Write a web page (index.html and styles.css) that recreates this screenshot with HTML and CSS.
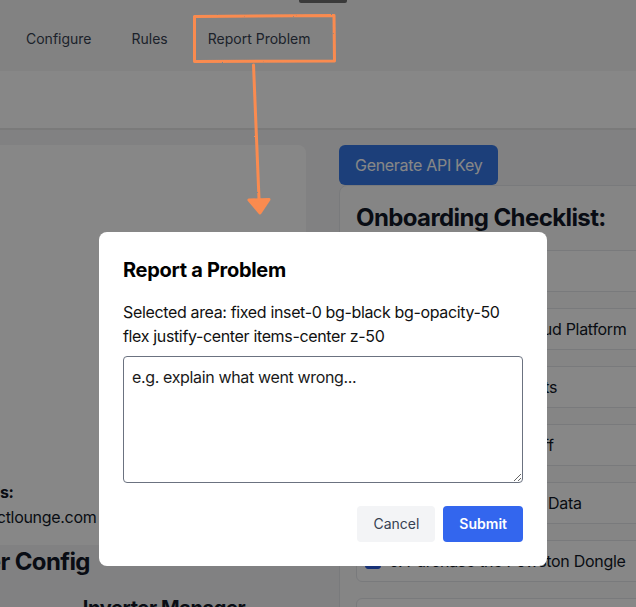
FILE: index.html
```html
<!DOCTYPE html>
<html lang="en">
<head>
<meta charset="utf-8">
<title>Report a Problem</title>
<link rel="stylesheet" href="styles.css">
</head>
<body>
<div class="page">
  <header class="nav">
    <span class="nav-tip"></span>
    <a class="nav-link">Configure</a>
    <a class="nav-link">Rules</a>
    <a class="nav-link">Report Problem</a>
  </header>
  <div class="band"></div>
  <main class="main">
    <section class="left">
      <div class="info-card">
        <p class="info-label">Contact Us:</p>
        <p class="info-value">hi@productlounge.com</p>
      </div>
      <h2 class="config-title">Inverter Config</h2>
      <h3 class="manager-title">Inverter Manager</h3>
    </section>
    <section class="right">
      <button class="api-btn">Generate API Key</button>
      <div class="checklist">
        <h2 class="checklist-title">Onboarding Checklist:</h2>
        <ul class="items">
          <li class="item"><span class="check"></span>1. Create Account</li>
          <li class="item"><span class="check"></span>2. Connect to the Cloud Platform</li>
          <li class="item"><span class="check"></span>3. Register Your Assets</li>
          <li class="item"><span class="check"></span>4. Configure The Tariff</li>
          <li class="item"><span class="check"></span>5. Import all historical Data</li>
          <li class="item"><span class="check checked"></span>6. Purchase the Powston Dongle</li>
          <li class="item"><span class="check"></span>7. Go Live</li>
        </ul>
      </div>
    </section>
  </main>
</div>

<div class="overlay">
  <div class="modal">
    <h2 class="modal-title">Report a Problem</h2>
    <p class="modal-text">Selected area: fixed inset-0 bg-black bg-opacity-50 flex justify-center items-center z-50</p>
    <textarea class="modal-input" placeholder="e.g. explain what went wrong..."></textarea>
    <div class="modal-actions">
      <button class="btn btn-cancel">Cancel</button>
      <button class="btn btn-submit">Submit</button>
    </div>
  </div>
</div>

<svg class="annotation" width="636" height="607" viewBox="0 0 636 607">
  <defs>
    <filter id="rough" x="-5%" y="-5%" width="110%" height="110%">
      <feTurbulence type="fractalNoise" baseFrequency="0.9" numOctaves="2" seed="3"/>
      <feDisplacementMap in="SourceGraphic" scale="1.6"/>
    </filter>
  </defs>
  <g filter="url(#rough)" stroke="#fa8b50" fill="none" stroke-width="3" stroke-linejoin="round" stroke-linecap="round">
    <path d="M194.5 16.5 L334 15.5 L334.5 61 L194.5 61.5 Z"/>
    <path d="M253.5 65 L259 199"/>
    <path d="M249 200 L269 199.5 L260 213 Z" fill="#fa8b50"/>
  </g>
</svg>
</body>
</html>
```

FILE: styles.css
```css
html, body {
  margin: 0;
  padding: 0;
}

body {
  width: 636px;
  height: 607px;
  overflow: hidden;
  background: #f4f4f5;
  font-family: Inter, "Noto Sans", "Liberation Sans", sans-serif;
  color: #111827;
}

.page {
  width: 636px;
  overflow: hidden;
}

/* top navigation */
.nav {
  position: relative;
  height: 71px;
  box-sizing: border-box;
  padding: 29px 0 0 26px;
  display: flex;
  align-items: flex-start;
  gap: 40px;
  background: #f6f6f6;
}

.nav-tip {
  position: absolute;
  left: 299px;
  top: 0;
  width: 48px;
  height: 3px;
  border-radius: 0 0 2px 2px;
  background: #6e6e6e;
}

.nav-link {
  font-size: 14px;
  line-height: 20px;
  color: #374151;
}

.band {
  height: 57px;
  background: #ffffff;
  border-bottom: 2px solid #e6e6e6;
}

/* main content */
.main {
  display: grid;
  grid-template-columns: 384px 340px;
  column-gap: 33px;
  margin-left: -78px;
  padding-top: 15px;
}

.left {
  display: flex;
  flex-direction: column;
}

.info-card {
  height: 400px;
  box-sizing: border-box;
  padding: 16px 16px 16px 4px;
  background: #ffffff;
  border-radius: 8px;
  display: flex;
  flex-direction: column;
  justify-content: flex-end;
}

.info-label {
  margin: 0 0 1px;
  font-size: 16px;
  line-height: 24px;
  font-weight: 700;
  letter-spacing: -0.4px;
}

.info-value {
  margin: 0;
  font-size: 16px;
  line-height: 24px;
  letter-spacing: -0.3px;
}

.config-title {
  margin: 1px 0 0;
  font-size: 24px;
  line-height: 32px;
  font-weight: 700;
  letter-spacing: -0.6px;
}

.manager-title {
  margin: 16px 0 0;
  padding-left: 100px;
  text-align: center;
  font-size: 20px;
  line-height: 28px;
  font-weight: 700;
  letter-spacing: -0.4px;
}

.right {
  display: flex;
  flex-direction: column;
  align-items: flex-start;
}

.api-btn {
  height: 40px;
  padding: 0 16px;
  border: none;
  border-radius: 6px;
  background: #3578e6;
  color: #ffffff;
  font-family: inherit;
  font-size: 16px;
  line-height: 24px;
  letter-spacing: -0.3px;
}

.checklist {
  align-self: stretch;
  padding: 16px;
  border: 1px solid #e5e7eb;
  border-radius: 8px;
  background: #fbfbfb;
}

.checklist-title {
  margin: 0 0 16px;
  font-size: 24px;
  line-height: 32px;
  font-weight: 700;
  letter-spacing: -0.6px;
}

.items {
  list-style: none;
  margin: 0;
  padding: 0;
  display: flex;
  flex-direction: column;
  gap: 16px;
}

.item {
  display: flex;
  align-items: center;
  gap: 8px;
  padding: 8px;
  border: 1px solid #e5e7eb;
  border-radius: 6px;
  background: #ffffff;
  font-size: 16px;
  line-height: 24px;
  letter-spacing: -0.3px;
  white-space: nowrap;
}

.check {
  width: 16px;
  height: 16px;
  box-sizing: border-box;
  border: 1px solid #6b7280;
  border-radius: 3px;
  background: #ffffff;
  flex: none;
}

.check.checked {
  border-color: #2d5fe0;
  background: #2d5fe0;
}

/* modal */
.overlay {
  position: fixed;
  inset: 0;
  background: rgba(0, 0, 0, 0.47);
  display: flex;
  align-items: flex-start;
  justify-content: flex-start;
  padding: 232px 0 0 99px;
  z-index: 50;
}

.modal {
  width: 448px;
  box-sizing: border-box;
  padding: 24px;
  background: #ffffff;
  border-radius: 8px;
}

.modal-title {
  margin: 0 0 16px;
  font-size: 20px;
  line-height: 28px;
  font-weight: 700;
  letter-spacing: -0.3px;
  color: #000000;
}

.modal-text {
  margin: 0 0 8px;
  font-size: 16px;
  line-height: 24px;
  letter-spacing: -0.35px;
  color: #111111;
}

.modal-input {
  display: block;
  width: 100%;
  height: 127px;
  box-sizing: border-box;
  margin: 0 0 23px;
  padding: 8px;
  border: 1px solid #6b7280;
  border-radius: 4px;
  font-family: inherit;
  font-size: 16px;
  line-height: 24px;
  letter-spacing: -0.35px;
  color: #111111;
}

.modal-input::placeholder {
  color: #1a1a1a;
  opacity: 1;
}

.modal-actions {
  display: flex;
  justify-content: flex-end;
  gap: 8px;
}

.btn {
  height: 36px;
  padding: 0 16px;
  border: none;
  border-radius: 4px;
  font-family: inherit;
  font-size: 14px;
  line-height: 20px;
}

.btn-cancel {
  background: #f3f4f6;
  color: #374151;
}

.btn-submit {
  background: #3366ee;
  color: #ffffff;
  font-weight: 600;
}

.annotation {
  position: fixed;
  left: 0;
  top: 0;
  z-index: 60;
  pointer-events: none;
}
```
